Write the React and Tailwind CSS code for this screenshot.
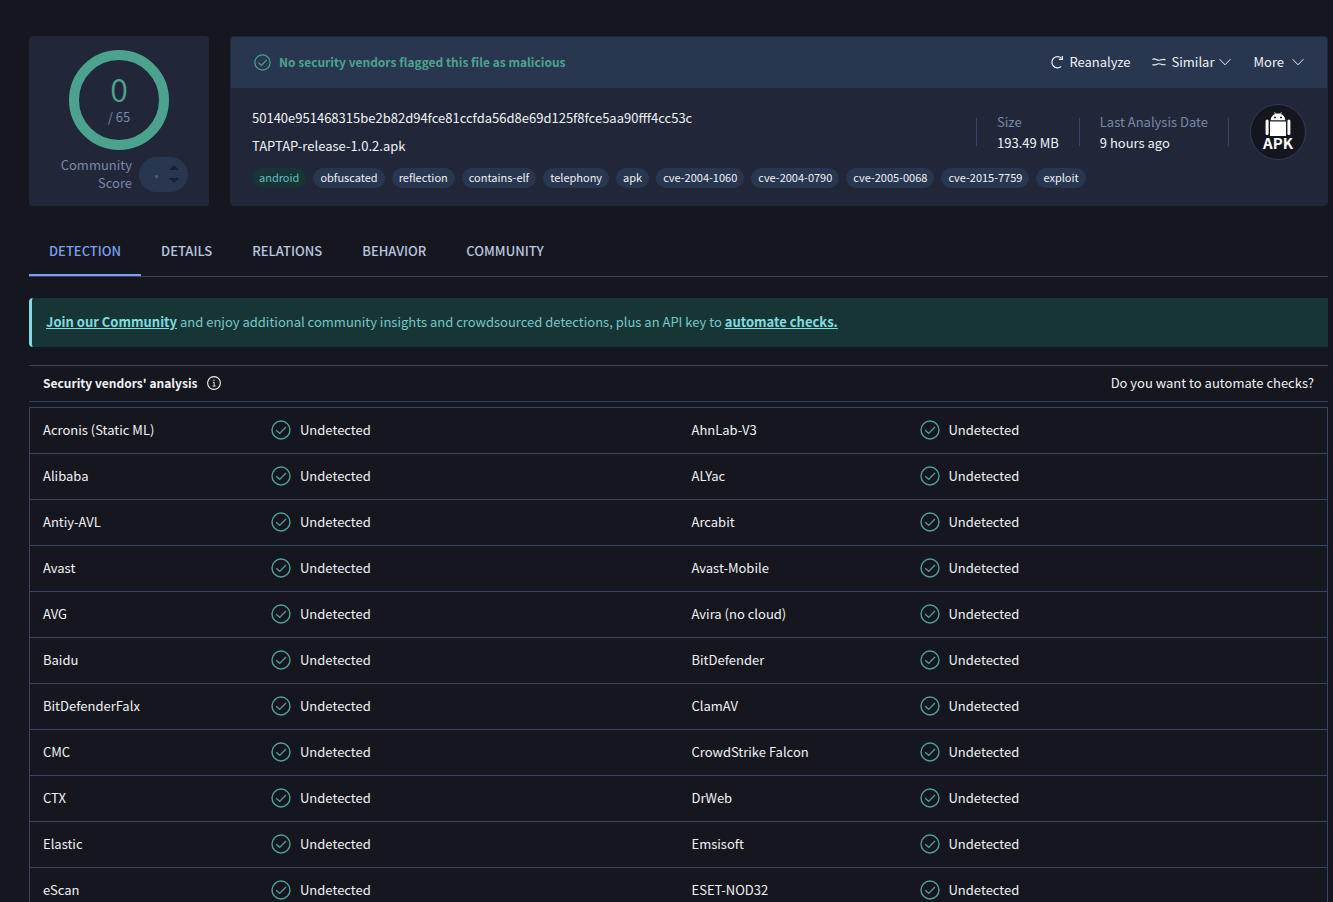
import React from 'react';
import clsx from 'clsx';

const tags = [
    'android', 'obfuscated', 'reflection', 'contains-elf', 'telephony', 'apk',
    'cve-2004-1060', 'cve-2004-0790', 'cve-2005-0068', 'cve-2015-7759', 'exploit',
];

const tabs = ['Detection', 'Details', 'Relations', 'Behavior', 'Community'];

const vendors = [
    ['Acronis (Static ML)', 'AhnLab-V3'],
    ['Alibaba', 'ALYac'],
    ['Antiy-AVL', 'Arcabit'],
    ['Avast', 'Avast-Mobile'],
    ['AVG', 'Avira (no cloud)'],
    ['Baidu', 'BitDefender'],
    ['BitDefenderFalx', 'ClamAV'],
    ['CMC', 'CrowdStrike Falcon'],
    ['CTX', 'DrWeb'],
    ['Elastic', 'Emsisoft'],
    ['eScan', 'ESET-NOD32'],
];

function CheckIcon({ className }) {
    return (
        <svg className={className} viewBox="0 0 20 20" fill="none" stroke="currentColor" strokeWidth="1.4">
            <circle cx="10" cy="10" r="9" />
            <path d="M5.2 10.2 8.7 13.4 15 7" />
        </svg>
    );
}

function ChevronIcon() {
    return (
        <svg className="h-3 w-3" viewBox="0 0 12 12" fill="none" stroke="currentColor" strokeWidth="1">
            <path d="M.6 3.2 6 8.8l5.4-5.6" />
        </svg>
    );
}

function ReanalyzeIcon() {
    return (
        <svg className="h-[14px] w-[14px]" viewBox="0 0 14 14" fill="none" stroke="currentColor" strokeWidth="1.2">
            <path d="M11.2 11.4A5.6 5.6 0 1 1 11.4 3.2" />
            <path d="M8.8 4.4h3.6V1" />
        </svg>
    );
}

function SimilarIcon() {
    return (
        <svg className="h-[14px] w-[14px]" viewBox="0 0 15 14" fill="none" stroke="currentColor" strokeWidth="1.2">
            <path d="M.5 4.3c1.2-.8 2.5-.8 4 0s3.5 1.2 5.5.4 3-.8 4.500-.2" />
            <path d="M.5 9.8c1.5.5 2.500.6 4-.2s3.500-1 5.500-.2 3 .8 4.500.2" />
        </svg>
    );
}

function InfoIcon() {
    return (
        <svg className="h-[14px] w-[14px]" viewBox="0 0 14 14" fill="none" stroke="currentColor" strokeWidth="1.1">
            <circle cx="7" cy="7" r="6.4" />
            <path d="M5.8 6.3H7.2V10M5.6 10.1h3" strokeWidth=".9" />
            <circle cx="7" cy="4.2" r=".7" fill="currentColor" stroke="none" />
        </svg>
    );
}

function ApkBadge() {
    return (
        <div className="flex h-14 w-14 shrink-0 flex-col items-center rounded-full border border-[#2f3d5c] bg-[#15151e] pt-[7px] text-white">
            <svg className="h-6 w-[26px] shrink-0" viewBox="0 0 26 24" fill="currentColor">
                <path d="M9.5.3l1.3 2.2M16.5.3l-1.3 2.2" stroke="currentColor" strokeWidth=".8" />
                <path fillRule="evenodd" d="M5.6 8.2C6 4.2 9 1.6 13 1.6s7 2.6 7.4 6.6zM9 5.4a1 1 0 1 0 2 0 1 1 0 1 0-2 0zm6 0a1 1 0 1 0 2 0 1 1 0 1 0-2 0z" />
                <path d="M5 9.4h16V24H5z" />
                <rect x=".6" y="7.6" width="3" height="15.4" rx="1.5" />
                <rect x="22.4" y="7.6" width="3" height="15.4" rx="1.5" />
            </svg>
            <span className="text-[15px] leading-[13px] font-bold">APK</span>
        </div>
    );
}

function ScoreCard() {
    return (
        <section className="flex w-[180px] shrink-0 flex-col items-center rounded bg-[#212738] pt-[14px]">
            <div className="flex h-[100px] w-[100px] flex-col items-center rounded-full border-[10px] border-[#4ba38e] pt-[9px]">
                <span className="text-[32px] leading-[38px] font-[350] text-[#4ba38e]">0</span>
                <span className="text-[13px] leading-[20px] text-[#7a88aa]">/ 65</span>
            </div>
            <div className="mt-[6px] flex items-center gap-[7px] self-end pr-[21px] text-[#7a88aa]">
                <p className="w-[80px] text-right text-[13px] leading-[18px]">Community Score</p>
                <div className="flex h-[35px] w-[49px] items-center justify-between rounded-full bg-[#29364f] pr-[9px] pl-4">
                    <span className="mt-1 h-[3px] w-[3px] rounded-full bg-[#566079]"></span>
                    <div className="flex flex-col gap-2 text-[#1b2030]">
                        <button type="button" aria-label="Vote up" className="block">
                            <svg className="h-[5px] w-[10px]" viewBox="0 0 10 5" fill="currentColor"><path d="M0 5 5 0l5 5z" /></svg>
                        </button>
                        <button type="button" aria-label="Vote down" className="block">
                            <svg className="h-[5px] w-[10px]" viewBox="0 0 10 5" fill="currentColor"><path d="M0 0h10L5 5z" /></svg>
                        </button>
                    </div>
                </div>
            </div>
        </section>
    );
}

function Stat({ label, value }) {
    return (
        <div className="flex items-center">
            <div className="h-7 w-px bg-[#36446a]"></div>
            <dl className="px-5 leading-[21px] whitespace-nowrap">
                <dt className="text-[#7a88aa]">{label}</dt>
                <dd>{value}</dd>
            </dl>
        </div>
    );
}

function FileCard() {
    return (
        <section className="min-w-0 flex-1 overflow-hidden rounded border border-[#212738] bg-[#212738]">
            <div className="flex h-[51px] items-center justify-between bg-[#29364f] pr-[23px] pb-px pl-[23px]">
                <div className="flex items-center gap-2 text-[12px] font-bold text-[#4ba38e]">
                    <CheckIcon className="h-[17px] w-[17px]" />
                    No security vendors flagged this file as malicious
                </div>
                <div className="flex items-center gap-[22px]">
                    <button type="button" className="flex items-center gap-[5px]">
                        <ReanalyzeIcon />
                        Reanalyze
                    </button>
                    <button type="button" className="flex items-center gap-[5px]">
                        <SimilarIcon />
                        Similar
                        <ChevronIcon />
                    </button>
                    <button type="button" className="flex items-center gap-2">
                        More
                        <ChevronIcon />
                    </button>
                </div>
            </div>
            <div className="px-[21px] pt-4">
                <div className="flex items-center justify-between">
                    <div className="min-w-0 leading-7">
                        <p className="truncate">50140e951468315be2b82d94fce81ccfda56d8e69d125f8fce5aa90fff4cc53c</p>
                        <p className="truncate">TAPTAP-release-1.0.2.apk</p>
                    </div>
                    <div className="flex shrink-0 items-center">
                        <Stat label="Size" value="193.49 MB" />
                        <Stat label="Last Analysis Date" value="9 hours ago" />
                        <div className="mr-[21px] h-7 w-px bg-[#36446a]"></div>
                        <ApkBadge />
                    </div>
                </div>
                <div className="mt-2 flex gap-[7px]">
                    {tags.map((tag, i) => (
                        <a
                            key={tag}
                            href="#"
                            className={clsx(
                                'h-5 shrink-0 rounded-full px-[7px] text-[11px] leading-[18px]',
                                i === 0 ? 'bg-[#183536] text-[#62bdc0]' : 'bg-[#29364f]'
                            )}
                        >
                            {tag}
                        </a>
                    ))}
                </div>
            </div>
        </section>
    );
}

function VendorCells({ name }) {
    return (
        <>
            <th scope="row" className="border-b border-[#36446a] pb-[2px] pl-[13px] text-left font-normal">{name}</th>
            <td className="border-b border-[#36446a] pb-[2px] pl-[13px]">
                <span className="flex items-center gap-[9px]">
                    <CheckIcon className="h-5 w-5 text-[#4ba38e]" />
                    Undetected
                </span>
            </td>
        </>
    );
}

export default function App() {
    return (
        <main className="min-h-screen bg-[#16161f] pt-9 pr-[5px] pl-[29px] font-['Noto_Sans_CJK_SC','Noto_Sans_CJK_JP',sans-serif] text-[13px] leading-[20px] text-[#f0f2f7]">
            <div className="flex h-[170px] items-stretch gap-[21px]">
                <ScoreCard />
                <FileCard />
            </div>

            <nav className="mt-[21px] flex h-[50px] border-b border-[#36446a] font-medium">
                {tabs.map((tab, i) => (
                    <a
                        key={tab}
                        href="#"
                        className={clsx(
                            'border-b-2 px-5 pt-[14px] uppercase',
                            i === 0 ? 'border-[#7b9ff0] text-[#7b9ff0]' : 'border-transparent text-[#bac6e0]'
                        )}
                    >
                        {tab}
                    </a>
                ))}
            </nav>

            <p className="mt-[21px] rounded-l border-l-[3px] border-[#80dcdf] bg-[#183536] pt-[13px] pb-[15px] pl-[14px] leading-[21px] text-[#73c8cb]">
                <a href="#" className="font-bold text-[#80dcdf] underline">Join our Community</a>
                {' '}and enjoy additional community insights and crowdsourced detections, plus an API key to{' '}
                <a href="#" className="font-bold text-[#80dcdf] underline">automate checks.</a>
            </p>

            <div className="mt-[18px] flex h-[37px] items-center justify-between border-y border-[#36446a] px-[14px] pb-px">
                <h2 className="flex items-center gap-[10px] text-[12px] font-bold">
                    Security vendors' analysis
                    <InfoIcon />
                </h2>
                <a href="#">Do you want to automate checks?</a>
            </div>

            <div className="mt-[5px] border border-b-0 border-[#36446a]">
                <table className="w-full table-fixed border-separate border-spacing-0">
                    <colgroup>
                        <col className="w-[228px]" />
                        <col />
                        <col className="w-[228px]" />
                        <col />
                    </colgroup>
                    <tbody>
                        {vendors.map(([left, right]) => (
                            <tr key={left} className="h-[46px]">
                                <VendorCells name={left} />
                                <VendorCells name={right} />
                            </tr>
                        ))}
                    </tbody>
                </table>
            </div>
        </main>
    );
}
